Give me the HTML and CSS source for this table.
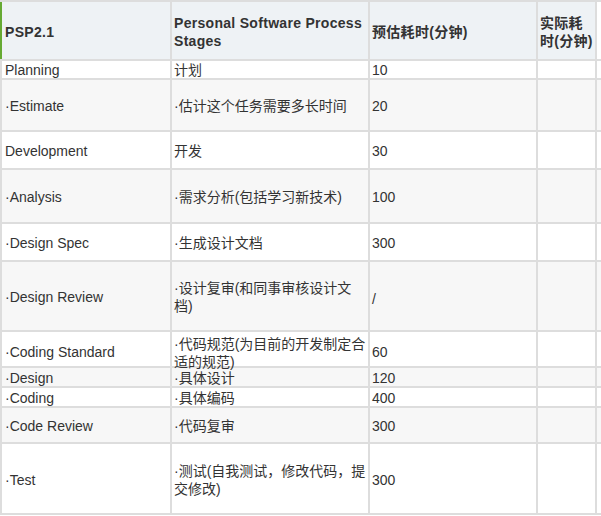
FILE: index.html
```html
<!DOCTYPE html>
<html lang="zh-CN">
<head>
<meta charset="utf-8">
<title>PSP2.1</title>
<link rel="stylesheet" href="styles.css">
</head>
<body>
<table class="psp">
  <colgroup>
    <col class="c1"><col class="c2"><col class="c3"><col class="c4"><col class="c5">
  </colgroup>
  <thead>
    <tr class="h57">
      <th class="first">PSP2.1</th>
      <th>Personal Software Process Stages</th>
      <th>预估耗时(分钟)</th>
      <th>实际耗时(分钟)</th>
      <th class="blank"></th>
    </tr>
  </thead>
  <tbody>
    <tr class="h17"><td>Planning</td><td>计划</td><td>10</td><td></td><td></td></tr>
    <tr class="h50"><td>·Estimate</td><td>·估计这个任务需要多长时间</td><td>20</td><td></td><td></td></tr>
    <tr class="h36"><td>Development</td><td>开发</td><td>30</td><td></td><td></td></tr>
    <tr class="h52"><td>·Analysis</td><td>·需求分析(包括学习新技术)</td><td>100</td><td></td><td></td></tr>
    <tr class="h36"><td>·Design Spec</td><td>·生成设计文档</td><td>300</td><td></td><td></td></tr>
    <tr class="h68"><td>·Design Review</td><td>·设计复审(和同事审核设计文档)</td><td class="low">/</td><td></td><td></td></tr>
    <tr class="h34"><td class="low">·Coding Standard</td><td class="tight"><div class="squeeze">·代码规范(为目前的开发制定合适的规范)</div></td><td class="low">60</td><td></td><td></td></tr>
    <tr class="h18"><td>·Design</td><td>·具体设计</td><td>120</td><td></td><td></td></tr>
    <tr class="h18"><td>·Coding</td><td>·具体编码</td><td>400</td><td></td><td></td></tr>
    <tr class="h34"><td>·Code Review</td><td>·代码复审</td><td>300</td><td></td><td></td></tr>
    <tr class="h69"><td>·Test</td><td>·测试(自我测试，修改代码，提交修改)</td><td>300</td><td></td><td></td></tr>
  </tbody>
</table>
</body>
</html>
```

FILE: styles.css
```css
html, body {
  margin: 0;
  padding: 0;
  background: #fff;
  overflow: hidden;
}

.psp {
  table-layout: fixed;
  width: 619px;
  border-collapse: separate;
  border-spacing: 2px;
  background: #dddddd;
  font-family: "Liberation Sans", "Noto Sans CJK SC", sans-serif;
  font-size: 14px;
  line-height: 18px;
  color: #333;
}

.c1 { width: 168px; }
.c2 { width: 196px; }
.c3 { width: 166px; }
.c4 { width: 57px; }
.c5 { width: 20px; }

.psp th,
.psp td {
  padding: 2px 2px 0;
  text-align: left;
  vertical-align: middle;
  background: #fff;
}

.psp th:first-child,
.psp td:first-child {
  padding-left: 3px;
}

.psp th {
  background: #eef2f5;
  font-weight: bold;
  letter-spacing: 0.3px;
  color: #333;
}

.psp th.first {
  box-shadow: -2px 0 0 #66aa33;
}

.psp th.blank {
  background: #fff;
}

.psp tbody tr:nth-child(even) td {
  background: #f7f7f7;
}

.psp td.low {
  padding-top: 6px;
}

.psp td.tight {
  padding-top: 0;
  vertical-align: top;
}

.squeeze {
  box-sizing: border-box;
  height: 34px;
  padding-top: 3px;
  line-height: 18px;
}

.h57 { height: 57px; }
.h17 { height: 17px; }
.h17 td { line-height: 15px; }
.h18 { height: 18px; }
.h18 td { line-height: 16px; }
.h34 { height: 34px; }
.h36 { height: 36px; }
.h50 { height: 50px; }
.h52 { height: 52px; }
.h68 { height: 68px; }
.h69 { height: 69px; }
```
